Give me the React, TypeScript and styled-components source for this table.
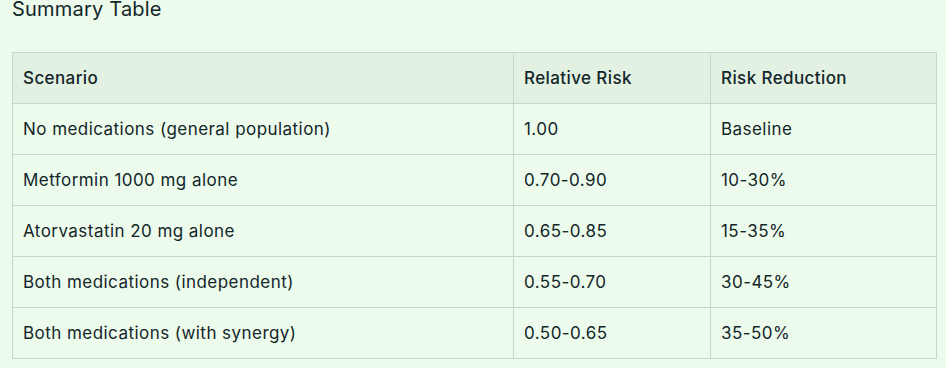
import React from 'react';
import styled, {createGlobalStyle} from 'styled-components';

const GlobalStyle = createGlobalStyle`
  html, body {
    margin: 0;
    padding: 0;
    background: #edfbec;
  }
`;

const Page = styled.div`
  padding: 0 10px 0 12px;
  font-family: Inter, 'Liberation Sans', sans-serif;
  color: #13262a;
`;

const Heading = styled.h3`
  margin: 0;
  height: 52px;
  font-size: 20px;
  font-weight: 400;
  line-height: 18px;
  letter-spacing: 0.2px;
`;

const Table = styled.table`
  width: 924px;
  border-collapse: collapse;
  table-layout: fixed;
`;

const HeadCell = styled.th<{$width: number}>`
  box-sizing: border-box;
  width: ${({$width}) => $width}px;
  height: 51px;
  padding: 0 10px;
  background: #e2f1e2;
  border: 1px solid #c6d7c9;
  font-size: 17px;
  font-weight: 500;
  letter-spacing: 0.4px;
  text-align: left;
`;

const Cell = styled.td`
  box-sizing: border-box;
  height: 51px;
  padding: 0 10px;
  border: 1px solid #c6d7c9;
  font-size: 17px;
  font-weight: 400;
  letter-spacing: 0.45px;
`;

const rows = [
  ['No medications (general population)', '1.00', 'Baseline'],
  ['Metformin 1000 mg alone', '0.70-0.90', '10-30%'],
  ['Atorvastatin 20 mg alone', '0.65-0.85', '15-35%'],
  ['Both medications (independent)', '0.55-0.70', '30-45%'],
  ['Both medications (with synergy)', '0.50-0.65', '35-50%'],
];

const App = () => {
  return (
    <Page>
      <GlobalStyle />
      <Heading>Summary Table</Heading>
      <Table>
        <thead>
          <tr>
            <HeadCell $width={501}>Scenario</HeadCell>
            <HeadCell $width={197}>Relative Risk</HeadCell>
            <HeadCell $width={226}>Risk Reduction</HeadCell>
          </tr>
        </thead>
        <tbody>
          {rows.map((row) => (
            <tr key={row[0]}>
              {row.map((value) => (
                <Cell key={value}>{value}</Cell>
              ))}
            </tr>
          ))}
        </tbody>
      </Table>
    </Page>
  );
};

export default App;
